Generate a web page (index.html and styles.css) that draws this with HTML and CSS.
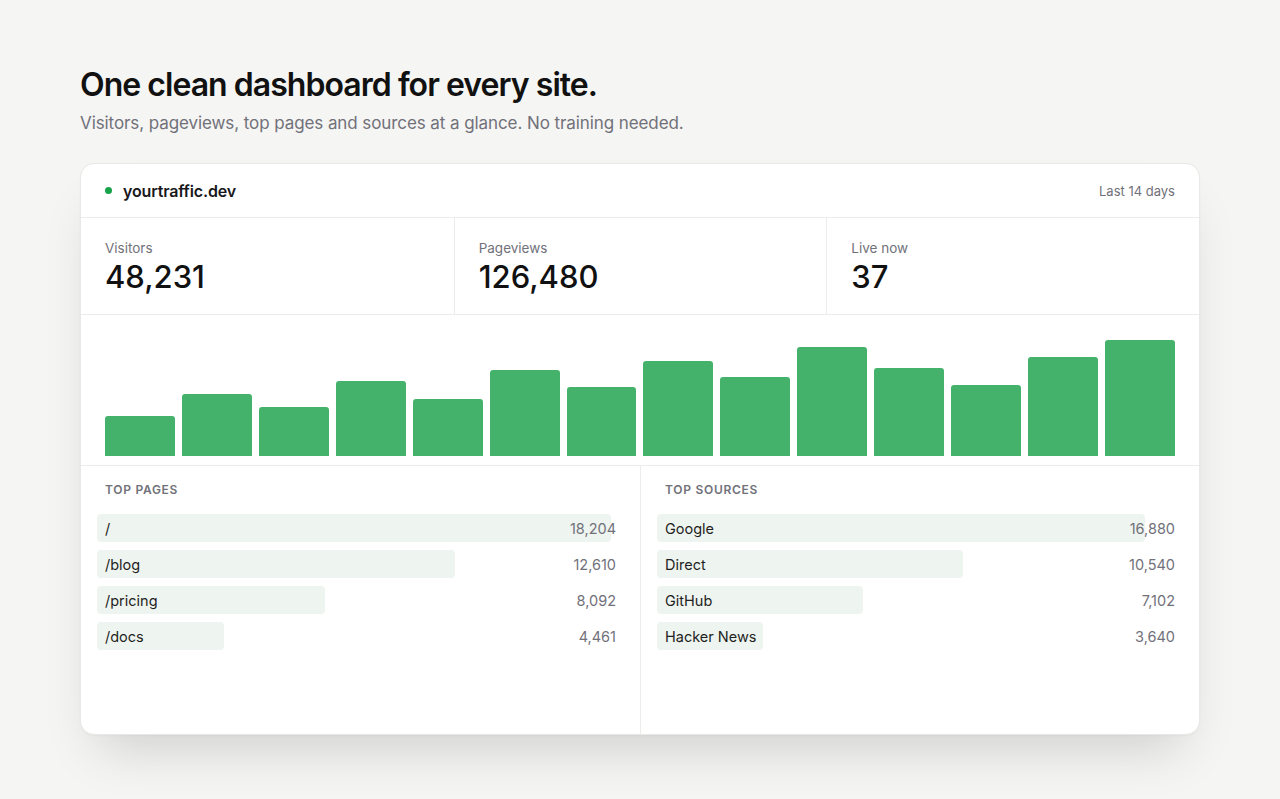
FILE: index.html
```html
<!DOCTYPE html>
<html lang="en">

<head>
  <meta charset="UTF-8" />
  <meta name="viewport" content="width=device-width, initial-scale=1.0" />
  <title>One clean dashboard</title>
  <link rel="stylesheet" href="styles.css">
</head>

<body>
  <div class="page">
    <h1 class="title">One clean dashboard for every site.</h1>
    <p class="lead">Visitors, pageviews, top pages and sources at a glance. No training needed.</p>

    <div class="card">
      <div class="card-head">
        <div class="site"><span class="dot"></span>yourtraffic.dev</div>
        <div class="range">Last 14 days</div>
      </div>

      <div class="stats">
        <div class="stat">
          <div class="stat-label">Visitors</div>
          <div class="stat-value">48,231</div>
        </div>
        <div class="stat">
          <div class="stat-label">Pageviews</div>
          <div class="stat-value">126,480</div>
        </div>
        <div class="stat">
          <div class="stat-label">Live now</div>
          <div class="stat-value">37</div>
        </div>
      </div>

      <!-- daily visitors, one bar per day -->
      <div class="chart">
        <div class="bar" style="height: 40px"></div>
        <div class="bar" style="height: 62px"></div>
        <div class="bar" style="height: 49px"></div>
        <div class="bar" style="height: 75px"></div>
        <div class="bar" style="height: 57px"></div>
        <div class="bar" style="height: 86px"></div>
        <div class="bar" style="height: 69px"></div>
        <div class="bar" style="height: 95px"></div>
        <div class="bar" style="height: 79px"></div>
        <div class="bar" style="height: 109px"></div>
        <div class="bar" style="height: 88px"></div>
        <div class="bar" style="height: 71px"></div>
        <div class="bar" style="height: 99px"></div>
        <div class="bar" style="height: 116px"></div>
      </div>

      <div class="lists">
        <div class="list">
          <div class="list-title">Top pages</div>
          <div class="row"><span class="fill" style="width: 99%"></span><span class="name">/</span><span class="count">18,204</span></div>
          <div class="row"><span class="fill" style="width: 68.9%"></span><span class="name">/blog</span><span class="count">12,610</span></div>
          <div class="row"><span class="fill" style="width: 44%"></span><span class="name">/pricing</span><span class="count">8,092</span></div>
          <div class="row"><span class="fill" style="width: 24.5%"></span><span class="name">/docs</span><span class="count">4,461</span></div>
        </div>
        <div class="list">
          <div class="list-title">Top sources</div>
          <div class="row"><span class="fill" style="width: 94.2%"></span><span class="name">Google</span><span class="count">16,880</span></div>
          <div class="row"><span class="fill" style="width: 59%"></span><span class="name">Direct</span><span class="count">10,540</span></div>
          <div class="row"><span class="fill" style="width: 39.7%"></span><span class="name">GitHub</span><span class="count">7,102</span></div>
          <div class="row"><span class="fill" style="width: 20.4%"></span><span class="name">Hacker News</span><span class="count">3,640</span></div>
        </div>
      </div>
    </div>
  </div>
</body>

</html>
```

FILE: styles.css
```css
html {
  background: #f5f5f3;
}

body {
  margin: 0;
  font-family: Inter, "Noto Sans", sans-serif;
  color: #111;
}

.page {
  width: 1120px;
  margin: 0 80px;
  padding-top: 65px;
  padding-bottom: 60px;
}

.title {
  margin: 0 0 5px;
  font-size: 32px;
  line-height: 40px;
  font-weight: 600;
  letter-spacing: -0.03em;
  color: #111;
}

.lead {
  margin: 0 0 27px;
  font-size: 17px;
  line-height: 26px;
  letter-spacing: -0.005em;
  color: #71717a;
}

.card {
  background: #fff;
  border: 1px solid #e8e8e6;
  border-radius: 14px;
  box-shadow: 0 30px 50px -18px rgba(0, 0, 0, 0.16), 0 1px 2px rgba(0, 0, 0, 0.03);
  overflow: hidden;
}

.card-head {
  display: flex;
  align-items: center;
  justify-content: space-between;
  height: 53px;
  padding: 0 24px;
  border-bottom: 1px solid #ececea;
}

.site {
  display: flex;
  align-items: center;
  gap: 11px;
  font-size: 16px;
  font-weight: 600;
  letter-spacing: -0.01em;
  color: #18181b;
}

.dot {
  width: 7px;
  height: 7px;
  border-radius: 50%;
  background: #16a34a;
}

.range {
  font-size: 13px;
  color: #71717a;
}

.stats {
  display: grid;
  grid-template-columns: 1fr 1fr 1fr;
  border-bottom: 1px solid #ececea;
}

.stat {
  padding: 20px 24px 18px;
}

.stat + .stat {
  border-left: 1px solid #ececea;
}

.stat-label {
  font-size: 13.5px;
  line-height: 20px;
  color: #71717a;
}

.stat-value {
  font-size: 31px;
  line-height: 38px;
  font-weight: 500;
  color: #111;
}

.chart {
  display: flex;
  align-items: flex-end;
  gap: 7px;
  height: 117px;
  padding: 24px 24px 9px;
  border-bottom: 1px solid #ececea;
}

.bar {
  flex: 1;
  background: #45b26b;
  border-radius: 3px 3px 0 0;
}

.lists {
  display: grid;
  grid-template-columns: 1fr 1fr;
  height: 268px;
}

.list {
  padding: 16px 24px;
}

.list + .list {
  border-left: 1px solid #ececea;
}

.list-title {
  margin-bottom: 16px;
  font-size: 12px;
  line-height: 16px;
  font-weight: 600;
  letter-spacing: 0.06em;
  text-transform: uppercase;
  color: #71717a;
}

.row {
  position: relative;
  display: flex;
  align-items: center;
  justify-content: space-between;
  height: 28px;
  margin: 0 0 8px -8px;
  padding-left: 8px;
  font-size: 14.5px;
}

.row .fill {
  position: absolute;
  top: 0;
  bottom: 0;
  left: 0;
  border-radius: 4px;
  background: #eef4ef;
}

.row .name {
  position: relative;
  color: #1f1f23;
}

.row .count {
  position: relative;
  color: #71717a;
}
```
